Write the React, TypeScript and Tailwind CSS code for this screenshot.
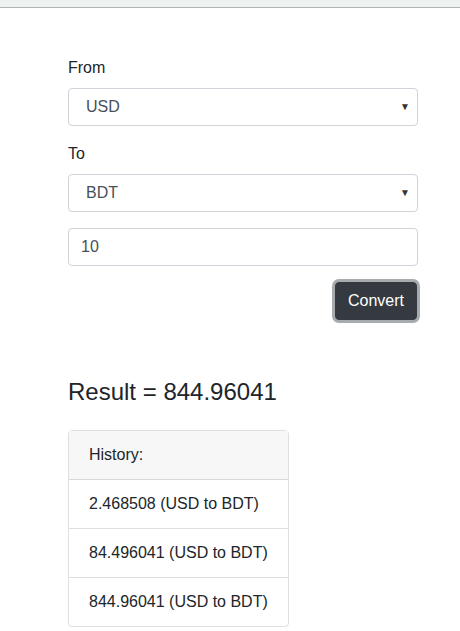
export default function App() {
	const history = ["2.468508 (USD to BDT)", "84.496041 (USD to BDT)", "844.96041 (USD to BDT)"];

	return (
		<div className="min-h-[631px] bg-white text-[16px] leading-[24px] text-[#212529] font-['Liberation_Sans',Arial,sans-serif]">
			<div className="h-[8px] bg-[#eef2f0] border-b border-[#b3b3b3]" />
			<div className="ml-[68px] w-[350px] pt-[48px]">
				<div className="mb-[16px]">
					<div className="mb-[8px]">From</div>
					<div className="flex h-[38px] items-center justify-between rounded-[4px] border border-[#ced4da] pl-[17px] pr-[7px] text-[#495057]">
						<span>USD</span>
						<span className="text-[10px] text-[#333]">▼</span>
					</div>
				</div>
				<div className="mb-[16px]">
					<div className="mb-[8px]">To</div>
					<div className="flex h-[38px] items-center justify-between rounded-[4px] border border-[#ced4da] pl-[17px] pr-[7px] text-[#495057]">
						<span>BDT</span>
						<span className="text-[10px] text-[#333]">▼</span>
					</div>
				</div>
				<div className="mb-[16px] flex h-[38px] items-center rounded-[4px] border border-[#ced4da] px-[12px] text-[#495057]">
					10
				</div>
				<div className="flex justify-end">
					<button className="h-[38px] rounded-[4px] border border-[#343a40] bg-[#343a40] px-[12px] text-white shadow-[0_0_0_3px_rgba(82,88,93,0.5)] mr-[1px]">
						Convert
					</button>
				</div>
			</div>
			<div className="ml-[68px] mt-[58px]">
				<h4 className="text-[24px] leading-[28.8px] font-normal">Result = 844.96041</h4>
				<div className="mt-[23px] w-[221px] rounded-[4px] border border-[rgba(0,0,0,0.125)]">
					<div className="bg-[#f7f7f7] px-[20px] py-[12px] border-b border-[rgba(0,0,0,0.125)]">History:</div>
					{history.map((h, i) => (
						<div
							key={i}
							className={"px-[20px] py-[12px]" + (i < history.length - 1 ? " border-b border-[rgba(0,0,0,0.125)]" : "")}
						>
							{h}
						</div>
					))}
				</div>
			</div>
		</div>
	);
}
